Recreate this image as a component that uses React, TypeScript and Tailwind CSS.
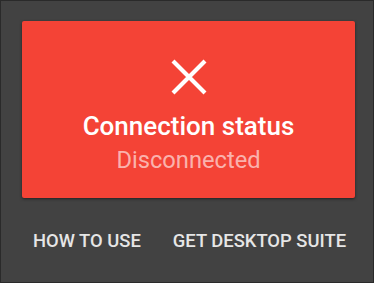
export default function App() {
  return (
    <div
      className="w-[374px] h-[283px] bg-[#424242] border border-[#2a2a2a] flex flex-col"
      style={{ fontFamily: "Roboto, 'Liberation Sans', sans-serif" }}
    >
      <div className="mt-[20px] ml-[21px] w-[333px] h-[177px] bg-[#f44336] rounded-[2px] shadow-[0_1px_3px_rgba(0,0,0,0.5)] flex flex-col items-center">
        <svg className="mt-[37px]" width="38" height="38" viewBox="0 0 38 38">
          <path d="M3 3 L35 35 M35 3 L3 35" stroke="#ffffff" strokeWidth="4.2" fill="none" />
        </svg>
        <div className="mt-[15px] text-white text-[26px] font-medium leading-[30px]">Connection status</div>
        <div className="mt-[5px] text-white/60 text-[23.7px] leading-[28px]">Disconnected</div>
      </div>
      <div className="mt-[33px] w-full flex text-[#e6e6e6] text-[18.4px] font-medium leading-[20px]">
        <div className="ml-[32px]">HOW TO USE</div>
        <div className="ml-[32px]">GET DESKTOP SUITE</div>
      </div>
    </div>
  );
}
